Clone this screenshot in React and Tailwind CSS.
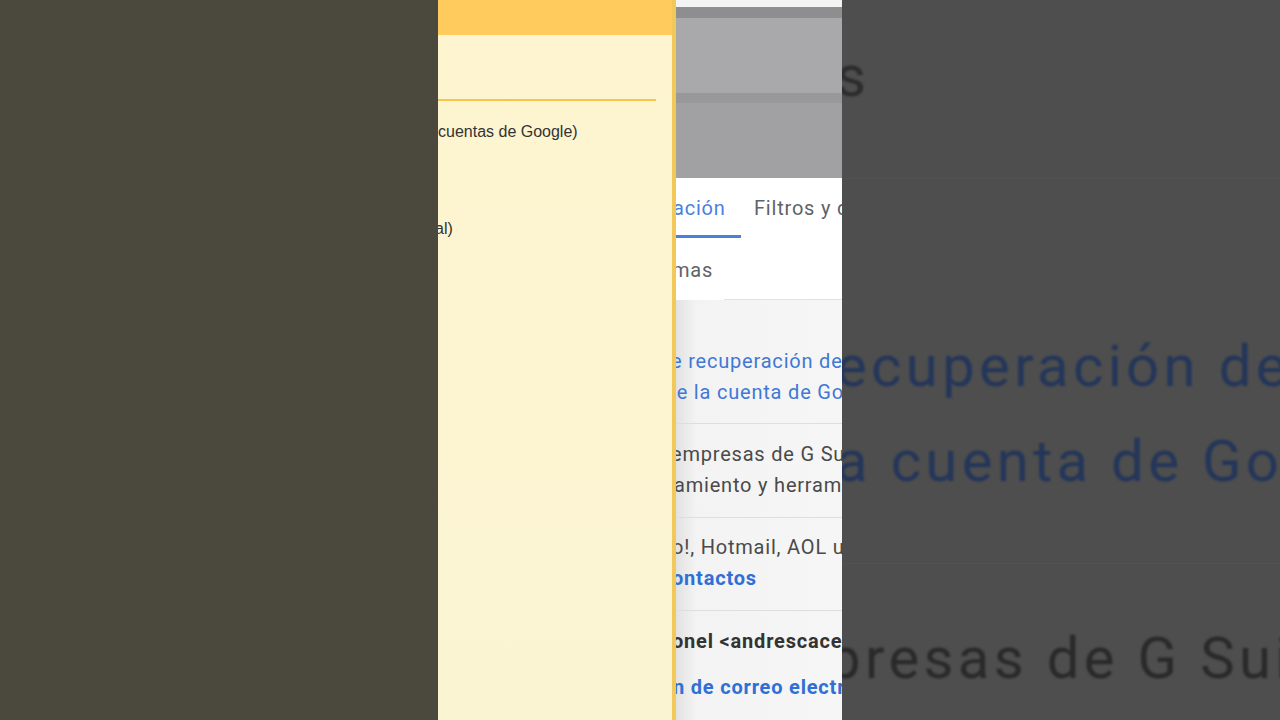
export default function App() {
  return (
    <div className="flex h-[720px] w-[1280px] overflow-hidden bg-[#4b483e] font-['Roboto',sans-serif]">
      {/* Left blurred backdrop */}
      <div className="w-[438px] shrink-0 bg-[#4b483e]" />

      {/* Yellow notes panel */}
      <div className="flex w-[238px] shrink-0 flex-col overflow-hidden border-r-4 border-[#f3c85a]">
        <div className="h-[35px] bg-[#ffcb5d]" />
        <div className="flex flex-1 flex-col bg-gradient-to-b from-[#fef4d0] to-[#fbf4d3] font-['Liberation_Sans',sans-serif] text-[16px] text-[#333]">
          <div className="mt-[64px] h-[2px] w-[218px] bg-[#f8c44c]" />
          <p className="mt-[21px] whitespace-nowrap leading-[20px]">cuentas de Google)</p>
          <p className="mt-[77px] whitespace-nowrap leading-[20px] -ml-[3px]">al)</p>
        </div>
      </div>

      {/* Gmail settings strip */}
      <div className="flex w-[166px] min-w-0 shrink-0 flex-col overflow-hidden bg-white">
        <div className="h-[7px] bg-[#f3f3f3]" />
        <div className="h-[11px] bg-[#8e8e90]" />
        <div className="h-[75px] bg-[#a9a9ab]" />
        <div className="h-[10px] bg-[#98989a]" />
        <div className="h-[75px] bg-[#a1a1a3]" />

        <div className="flex h-[62px] items-start overflow-hidden pt-[18px] text-[20px] tracking-[0.04em] whitespace-nowrap">
          <div className="flex w-[65px] shrink-0 flex-col">
            <span className="-ml-[3px] leading-[24px] text-[#4a80dc]">ación</span>
            <div className="mt-[15px] h-[3px] w-[65px] bg-[#4a80dc]" />
          </div>
          <span className="ml-[13px] leading-[24px] text-[#5f6368]">Filtros y d</span>
        </div>

        <div className="flex h-[60px] flex-col overflow-hidden">
          <span className="-ml-[4px] mt-[18px] whitespace-nowrap text-[20px] leading-[24px] tracking-[0.04em] text-[#5f6368]">mas</span>
          <div className="mt-[17px] ml-[48px] h-px bg-[#e2e2e2]" />
        </div>

        <div className="flex flex-1 flex-col overflow-hidden bg-[linear-gradient(to_right,#e2e2e2,#f3f3f3_12%,#f6f6f6)] text-[20px] tracking-[0.04em] whitespace-nowrap">
          <div className="flex h-[124px] flex-col border-b border-[#dedede] pt-[46px] leading-[31px] text-[#3f78d6]">
            <span className="-ml-[5px]">e recuperación de</span>
            <span className="-ml-[5px]">le la cuenta de Google</span>
          </div>
          <div className="flex h-[94px] flex-col border-b border-[#dedede] pt-[15px] leading-[31px] text-[#4a4a4a]">
            <span className="-ml-[5px]">empresas de G Suite</span>
            <span className="-ml-[2px]">amiento y herramientas</span>
          </div>
          <div className="flex h-[93px] flex-col border-b border-[#dedede] pt-[14px] leading-[31px]">
            <span className="-ml-[4px] text-[#4a4a4a]">o!, Hotmail, AOL u</span>
            <span className="-ml-[4px] font-bold text-[#2f6fd6]">ontactos</span>
          </div>
          <div className="flex flex-col pt-[15px] font-bold">
            <span className="-ml-[4px] leading-[31px] text-[#333]">onel &lt;andrescaceres</span>
            <span className="-ml-[3px] mt-[15px] leading-[31px] text-[#2f6fd6]">n de correo electrónico</span>
          </div>
        </div>
      </div>

      {/* Right blurred zoom */}
      <div className="flex min-w-0 flex-1 flex-col overflow-hidden bg-[#4e4e4e] text-[58px] whitespace-nowrap tracking-[0.075em]">
        <span className="-ml-[6px] mt-[44px] leading-[64px] text-[#2c2c2c] blur-[1.2px]">s</span>
        <div className="mt-[70px] h-px bg-[#525252]" />
        <span className="-ml-[6px] mt-[155px] leading-[64px] text-[#24365a] blur-[1.2px]">ecuperación de</span>
        <span className="-ml-[6px] mt-[31px] leading-[64px] text-[#24365a] blur-[1.2px]">a cuenta de Google</span>
        <div className="mt-[70px] h-px bg-[#525252]" />
        <span className="-ml-[14px] mt-[62px] leading-[64px] text-[#2a2a2a] blur-[1.2px]">presas de G Suite</span>
      </div>
    </div>
  );
}
